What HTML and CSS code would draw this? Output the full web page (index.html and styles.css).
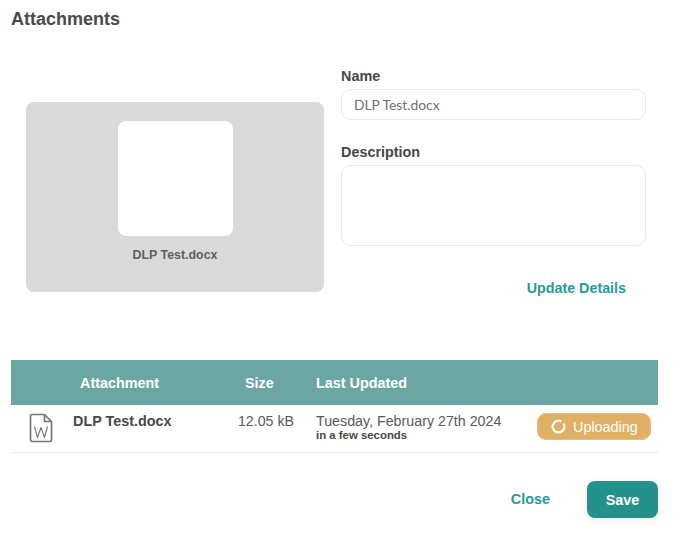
FILE: index.html
```html
<!DOCTYPE html>
<html lang="en">
<head>
<meta charset="utf-8">
<title>Attachments</title>
<link rel="stylesheet" href="styles.css">
</head>
<body>
<main class="dialog">
  <h1 class="title">Attachments</h1>
  <section class="details">
    <div class="preview">
      <div class="thumb"></div>
      <div class="preview-name">DLP Test.docx</div>
    </div>
    <form class="form">
      <label class="label" for="name">Name</label>
      <input class="input" id="name" type="text" value="DLP Test.docx">
      <label class="label label-desc" for="desc">Description</label>
      <textarea class="input textarea" id="desc"></textarea>
      <div class="update-row"><span class="link">Update Details</span></div>
    </form>
  </section>
  <section class="table">
    <div class="row head">
      <div class="c-name">Attachment</div>
      <div class="c-size">Size</div>
      <div class="c-date">Last Updated</div>
    </div>
    <div class="row body">
      <div class="c-icon">
        <svg width="24" height="30" viewBox="0 0 24 30" fill="none" stroke="#777" stroke-width="1.7" stroke-linejoin="round">
          <path d="M3 1.5h12.5l7 7V27a1.5 1.5 0 0 1-1.5 1.5H3A1.5 1.5 0 0 1 1.5 27V3A1.5 1.5 0 0 1 3 1.5z"/>
          <path d="M15.5 1.5v7h7"/>
          <path d="M5.5 13.5l3 11 3.5-10 3.5 10 3-11" stroke-width="1.1"/>
        </svg>
      </div>
      <div class="file-name">DLP Test.docx</div>
      <div class="file-size">12.05 kB</div>
      <div class="file-date">
        <div class="date-main">Tuesday, February 27th 2024</div>
        <div class="date-rel">in a few seconds</div>
      </div>
      <div class="badge">
        <svg class="spinner" width="15" height="15" viewBox="0 0 15 15" fill="none" stroke="#fff" stroke-width="2.2">
          <path d="M12.6 4.55A5.9 5.9 0 1 1 10.4 2.4"/>
        </svg>
        <span>Uploading</span>
      </div>
    </div>
  </section>
  <footer class="actions">
    <span class="link close">Close</span>
    <button class="save" type="button">Save</button>
  </footer>
</main>
</body>
</html>
```
FILE: styles.css
```css
* { box-sizing: border-box; }
html, body { margin: 0; background: #fff; }
body {
  font-family: "Liberation Sans", Arial, sans-serif;
  color: #444;
  width: 688px;
  height: 537px;
  overflow: hidden;
}
.dialog { padding: 9px 30px 0 11px; }
.title {
  margin: 0;
  font-size: 18px;
  line-height: 21px;
  font-weight: 700;
  color: #4a4a4a;
}
.details {
  display: flex;
  margin-top: 38px;
  padding-left: 15px;
  gap: 17px;
}
.preview {
  width: 298px;
  height: 190px;
  margin-top: 34px;
  background: #dadada;
  border-radius: 8px;
  display: flex;
  flex-direction: column;
  align-items: center;
  padding-top: 19px;
}
.thumb {
  width: 115px;
  height: 115px;
  background: #fff;
  border-radius: 8px;
}
.preview-name {
  margin-top: 12px;
  font-size: 12.4px;
  line-height: 15px;
  font-weight: 700;
  color: #5f5f5f;
}
.form { width: 305px; display: flex; flex-direction: column; }
.label {
  font-size: 14.4px;
  line-height: 16px;
  font-weight: 700;
  color: #474747;
  margin-bottom: 5px;
}
.label-desc { margin-top: 24px; }
.input {
  display: block;
  width: 305px;
  height: 31px;
  border: 1px solid #e8e8e8;
  border-radius: 10px;
  padding: 0 12px;
  background: #fff;
  font-family: "Lato", sans-serif;
  font-size: 13.8px;
  color: #707070;
  outline: none;
}
.textarea { height: 81px; resize: none; }
.update-row {
  display: flex;
  justify-content: flex-end;
  padding-right: 20px;
  margin-top: 34px;
}
.link {
  font-size: 14.3px;
  line-height: 17px;
  font-weight: 700;
  color: #2b9a93;
}
.table { margin-top: 63px; width: 647px; }
.row { display: flex; }
.head {
  height: 45px;
  background: #6ca6a3;
  color: #fff;
  font-size: 14.4px;
  font-weight: 700;
  align-items: center;
}
.c-name { width: 234px; padding-left: 69px; }
.c-size { width: 71px; }
.c-date { flex: 1; }
.body {
  height: 48px;
  border-bottom: 1px solid #e8e8e8;
  position: relative;
}
.c-icon { width: 62px; padding: 8px 0 0 18px; }
.c-icon svg { display: block; }
.file-name {
  width: 153px;
  padding-top: 8px;
  font-size: 14.4px;
  line-height: 17px;
  font-weight: 700;
  color: #484848;
}
.file-size {
  width: 90px;
  padding-top: 8px;
  padding-right: 22px;
  text-align: right;
  font-size: 14.2px;
  line-height: 17px;
  color: #5a5a5a;
  white-space: nowrap;
}
.file-date { width: 221px; padding-top: 8px; }
.date-main { font-size: 14.25px; line-height: 17px; color: #5a5a5a; white-space: nowrap; }
.date-rel { font-size: 11.4px; line-height: 12px; font-weight: 700; color: #484848; margin-top: -1px; }
.badge {
  width: 114px;
  height: 27px;
  margin-top: 8px;
  background: #e0b064;
  border: 1px solid #e4bd80;
  border-radius: 9px;
  color: #fff;
  font-size: 14.4px;
  display: flex;
  align-items: center;
  gap: 7px;
  padding-left: 13px;
}
.actions {
  display: flex;
  justify-content: flex-end;
  align-items: center;
  gap: 37px;
  margin-top: 28px;
  width: 647px;
}
.close { font-size: 14.4px; }
.save {
  width: 71px;
  height: 37px;
  border: 0;
  border-radius: 8px;
  background: #24918b;
  color: #fff;
  font-family: inherit;
  font-size: 14.4px;
  font-weight: 700;
  box-shadow: 0 2px 8px rgba(0, 0, 0, 0.08);
}
```
